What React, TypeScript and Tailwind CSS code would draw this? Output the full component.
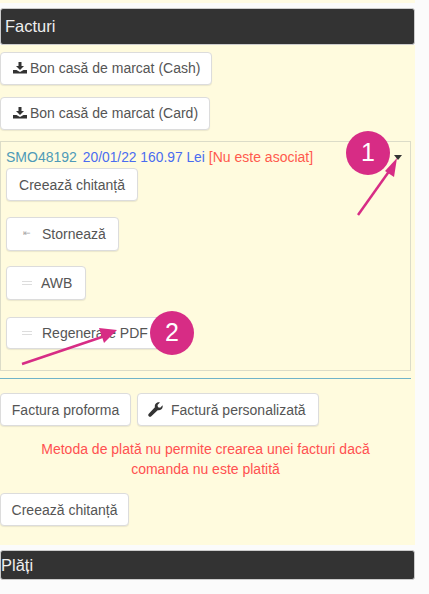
import React from 'react';

const btn = 'flex items-center bg-white border border-[#dcdcdc] rounded-[4px] text-[14px] leading-[18px] text-[#555] shadow-[0_1px_1px_rgba(0,0,0,0.08)] whitespace-nowrap';

const DownloadIcon = () => (
  <svg width="14" height="12" viewBox="0 0 14 12" className="mr-[3px] shrink-0">
    <path d="M5.500 0h3v4h2.500L7 8 3 4h2.500z" fill="#333" />
    <path d="M0 8h3.500L7 10l3.500-2H14v3.500H0z" fill="#333" />
  </svg>
);

const WrenchIcon = () => (
  <svg width="15" height="15" viewBox="0 0 15 15" className="shrink-0">
    <path d="M14.600 3.200c.3 1.500-.1 3-1.200 4-1 1-2.400 1.300-3.700 1L3.300 14.300c-.7.700-1.800.700-2.500 0s-.7-1.900 0-2.600L6.900 5.300c-.3-1.300 0-2.700 1-3.700 1-1.100 2.600-1.500 4-1.200L9.500 2.900l.5 2.300 2.200.5z" fill="#333" />
  </svg>
);

// small faded glyph in front of the dropdown items
const Dashes = () => (
  <span className="w-[10px] h-[4px] mr-[9px] shrink-0 border-y border-[#ddd]" />
);

const Header = ({ title, className }: { title: string; className: string }) => (
  <div className={`bg-[#333] text-[#eee] text-[16.5px] rounded-[3px] border border-[#ccc] flex items-center ${className}`}>
    {title}
  </div>
);

const Badge = ({ label, className }: { label: string; className: string }) => (
  <div className={`absolute w-[44px] h-[44px] rounded-full bg-[#d72c85] text-white text-[25px] flex items-center justify-center ${className}`}>
    {label}
  </div>
);

export default function App() {
  return (
    <div className="relative w-[429px] h-[594px] overflow-hidden bg-[#fbfbfb] font-['Liberation_Sans',Arial,sans-serif]">
      <div className="w-[415px] h-[3px] bg-[#fffbe3]" />
      <div className="w-[415px] h-[5px]" />

      <Header title="Facturi" className="w-[415px] h-[37px] pl-[4px]" />

      <div className="w-[415px] h-[500px] bg-[#fffbde] pt-[7px]">
        <div className={`${btn} w-[212px] h-[33px] pl-[12px] pb-[1px]`}>
          <DownloadIcon />
          Bon casă de marcat (Cash)
        </div>
        <div className={`${btn} w-[210px] h-[33px] pl-[12px] pb-[1px] mt-[12px]`}>
          <DownloadIcon />
          Bon casă de marcat (Card)
        </div>

        <div className="relative w-[411px] h-[230px] mt-[11px] border border-[#dcdcc8] pl-[5px] pt-[6px]">
          <div className="text-[14px] h-[18px] leading-[18px] whitespace-nowrap">
            <span className="text-[#4e9ab8]">SMO48192</span>
            <span className="text-[#4a6cf0] text-[13.8px] ml-[6px]">20/01/22 160.97 Lei</span>
            <span className="text-[#ff5a4d] ml-[4px]">[Nu este asociat]</span>
          </div>
          <div className="absolute right-[8px] top-[13px] w-0 h-0 border-x-[4.5px] border-x-transparent border-t-[5px] border-t-[#333]" />
          <div className={`${btn} w-[132px] h-[33px] justify-center mt-[2px]`}>Creează chitanță</div>
          <div className={`${btn} w-[113px] h-[34px] pl-[16px] pb-[1px] mt-[16px]`}>
            <span className="text-[#aaa] text-[9px] w-[10px] mr-[9px] shrink-0 leading-none">⇤</span>
            Stornează
          </div>
          <div className={`${btn} w-[80px] h-[34px] pl-[15px] pb-[1px] mt-[15px]`}>
            <Dashes />
            AWB
          </div>
          <div className={`${btn} w-[160px] h-[32px] pl-[15px] pb-[1px] mt-[17px]`}>
            <Dashes />
            <span className="ml-[1px]">Regenerare PDF</span>
          </div>
        </div>

        <div className="w-[411px] border-t border-[#6fb3c9] mt-[7px]" />

        <div className="flex gap-[6px] mt-[14px]">
          <div className={`${btn} w-[131px] h-[33px] justify-center`}>Factura proforma</div>
          <div className={`${btn} w-[182px] h-[33px] pl-[10px]`}>
            <WrenchIcon />
            <span className="ml-[8px]">Factură personalizată</span>
          </div>
        </div>

        <p className="text-[14px] leading-[20px] text-[#ff5050] text-center w-[411px] mt-[13px]">
          Metoda de plată nu permite crearea unei facturi dacă
          <br />
          comanda nu este platită
        </p>

        <div className={`${btn} w-[129px] h-[33px] justify-center mt-[14px]`}>Creează chitanță</div>
      </div>

      <Header title="Plăți" className="w-[415px] h-[30px] mt-[5px]" />

      {/* annotations drawn on top of the screenshot */}
      <svg className="absolute inset-0 pointer-events-none" width="429" height="594" viewBox="0 0 429 594">
        <line x1="358" y1="215" x2="390" y2="170" stroke="#d72c85" strokeWidth="2.500" />
        <polygon points="397,158 394,177 385,171" fill="#d72c85" />
        <line x1="22" y1="364" x2="102" y2="337" stroke="#d72c85" strokeWidth="2.500" />
        <polygon points="117,330 104,343 99,328" fill="#d72c85" />
      </svg>
      <Badge label="1" className="left-[346px] top-[131px]" />
      <Badge label="2" className="left-[150px] top-[311px]" />
    </div>
  );
}
